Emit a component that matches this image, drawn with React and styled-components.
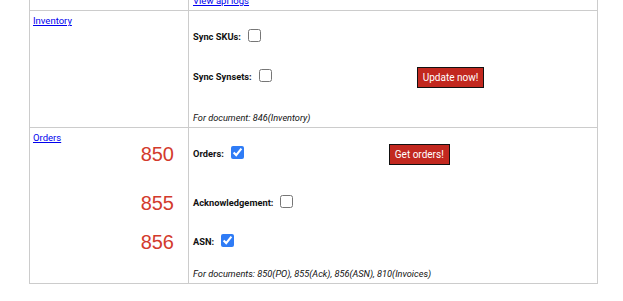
import React from "react";
import styled, { createGlobalStyle } from "styled-components";

const GlobalStyle = createGlobalStyle`
  body {
    margin: 0;
    background: #fff;
    font-family: Roboto, "Liberation Sans", sans-serif;
    color: #111;
  }
`;

const Page = styled.div`
  padding-left: 29px;
  margin-top: -9px;
`;

const Frame = styled.div`
  width: 569px;
  box-sizing: border-box;
  border: 1px solid #ccc;
  border-top: none;
`;

const Section = styled.div`
  display: grid;
  grid-template-columns: 159px 1fr;
  & + & {
    border-top: 1px solid #ccc;
  }
`;

const LeftCell = styled.div`
  box-sizing: border-box;
  border-right: 1px solid #ccc;
  padding: 4px 14px 3px 3px;
  display: flex;
  flex-direction: column;
`;

const RightCell = styled.div`
  padding: ${(p) => (p.$top ? "4px 4px 4px" : "15px 4px 3px")};
  display: flex;
  flex-direction: column;
`;

const Link = styled.a`
  font-size: 9.5px;
  line-height: 11px;
  color: #0000ee;
  text-decoration: underline;
  align-self: flex-start;
  cursor: pointer;
`;

const Line = styled.div`
  display: flex;
  align-items: center;
  height: 22px;
  margin-top: ${(p) => p.$mt || 0}px;
`;

const Code = styled.div`
  height: 22px;
  margin-top: ${(p) => p.$mt || 0}px;
  text-align: right;
  font-family: "Liberation Sans", Arial, sans-serif;
  font-size: 20px;
  line-height: 22px;
  color: #d33a2c;
`;

const Label = styled.span`
  font-size: 9.3px;
  font-weight: 700;
  line-height: 12px;
`;

const Check = styled.input.attrs({ type: "checkbox" })`
  width: 13px;
  height: 13px;
  margin: 0 0 4px 7px;
  accent-color: #2f7cf6;
`;

const Action = styled.button`
  margin-left: 145px;
  height: 21px;
  padding: 0 5px;
  border: 1.5px solid #111;
  background: #c2281f;
  color: #fff;
  font-family: Roboto, "Liberation Sans", sans-serif;
  font-size: 10px;
  line-height: 17px;
  cursor: pointer;
`;

const Note = styled.div`
  margin-top: ${(p) => p.$mt}px;
  font-size: 9.2px;
  font-style: italic;
  line-height: 12px;
`;

const inventory = [
  { label: "Sync SKUs:", checked: false, mt: 0 },
  { label: "Sync Synsets:", checked: false, mt: 18, button: "Update now!" },
];

const orders = [
  { code: "850", label: "Orders:", checked: true, mt: 0, button: "Get orders!" },
  { code: "855", label: "Acknowledgement:", checked: false, mt: 27 },
  { code: "856", label: "ASN:", checked: true, mt: 17 },
];

const Field = ({ item }) => (
  <Line $mt={item.mt}>
    <Label>{item.label}</Label>
    <Check defaultChecked={item.checked} />
    {item.button && <Action>{item.button}</Action>}
  </Line>
);

export default function App() {
  return (
    <Page>
      <GlobalStyle />
      <Frame>
        <Section>
          <LeftCell />
          <RightCell $top>
            <Link>View api logs</Link>
          </RightCell>
        </Section>

        <Section>
          <LeftCell>
            <Link>Inventory</Link>
          </LeftCell>
          <RightCell>
            {inventory.map((item) => (
              <Field key={item.label} item={item} />
            ))}
            <Note $mt={24}>For document: 846(Inventory)</Note>
          </RightCell>
        </Section>

        <Section>
          <LeftCell>
            <Link>Orders</Link>
            {orders.map((item) => (
              <Code key={item.code} $mt={item.mt}>
                {item.code}
              </Code>
            ))}
          </LeftCell>
          <RightCell>
            {orders.map((item) => (
              <Field key={item.label} item={item} />
            ))}
            <Note $mt={15}>For documents: 850(PO), 855(Ack), 856(ASN), 810(Invoices)</Note>
          </RightCell>
        </Section>
      </Frame>
    </Page>
  );
}
